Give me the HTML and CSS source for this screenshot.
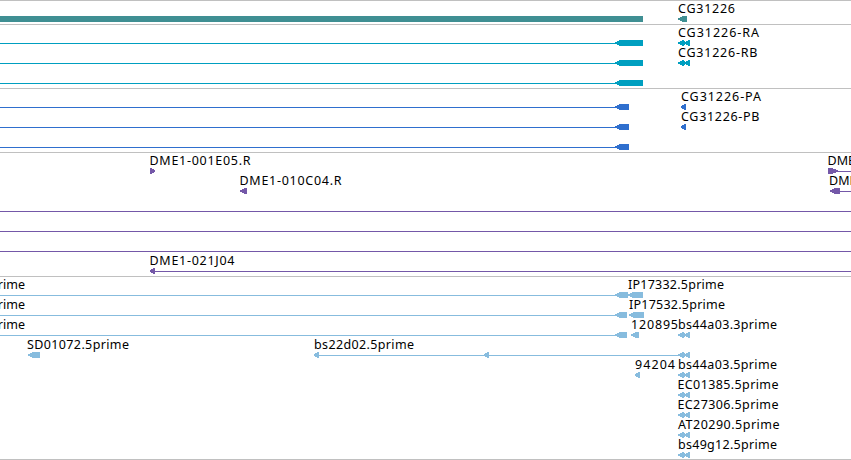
FILE: index.html
```
<!DOCTYPE html>
<html lang="en">
<head>
    <meta charset="UTF-8">
    <title>Genome Browser - CG31226</title>
    <link rel="stylesheet" href="styles.css">
</head>
<body>
    <!-- Shared glyphs: arrow heads and the two-exon pair, all pointing left -->
    <svg class="defs" width="0" height="0">
        <symbol id="head" viewBox="0 0 6 6" width="6" height="6">
            <path d="M0 2H2V1H4V0H6V6H4V5H2V4H0Z"/>
        </symbol>
        <symbol id="tip" viewBox="0 0 5 6" width="5" height="6">
            <path d="M0 2H1V1H3V0H5V6H3V5H1V4H0Z"/>
        </symbol>
        <symbol id="pair" viewBox="0 0 12 6" width="12" height="6">
            <path d="M0 2H2V1H4V0H6V1H7V2H8V1H10V0H12V6H10V5H8V4H7V5H6V6H4V5H2V4H0Z"/>
        </symbol>
    </svg>

    <main class="browser">
        <section class="track gene">
            <svg width="851" height="23">
                <rect x="0" y="15" width="643" height="6"/>
                <text x="678" y="12" textLength="57">CG31226</text>
                <use href="#head" x="678" y="15"/>
                <rect x="683" y="15" width="4" height="6"/>
            </svg>
        </section>

        <section class="track transcript">
            <svg width="851" height="63">
                <rect x="0" y="18" width="620" height="1"/>
                <use href="#head" x="615" y="15"/>
                <rect x="620" y="15" width="23" height="6"/>
                <text x="678" y="12" textLength="81">CG31226-RA</text>
                <use href="#pair" x="678" y="15"/>

                <rect x="0" y="38" width="620" height="1"/>
                <use href="#head" x="615" y="35"/>
                <rect x="620" y="35" width="23" height="6"/>
                <text x="678" y="32" textLength="79.5">CG31226-RB</text>
                <use href="#pair" x="678" y="35"/>

                <rect x="0" y="58" width="620" height="1"/>
                <use href="#head" x="615" y="55"/>
                <rect x="620" y="55" width="23" height="6"/>
            </svg>
        </section>

        <section class="track protein">
            <svg width="851" height="63">
                <rect x="0" y="18" width="620" height="1"/>
                <use href="#head" x="615" y="15"/>
                <rect x="620" y="15" width="9" height="6"/>
                <text x="681" y="12" textLength="80">CG31226-PA</text>
                <use href="#tip" x="681" y="15"/>

                <rect x="0" y="38" width="620" height="1"/>
                <use href="#head" x="615" y="35"/>
                <rect x="620" y="35" width="9" height="6"/>
                <text x="681" y="32" textLength="78.5">CG31226-PB</text>
                <use href="#tip" x="681" y="35"/>

                <rect x="0" y="58" width="620" height="1"/>
                <use href="#head" x="615" y="55"/>
                <rect x="620" y="55" width="9" height="6"/>
            </svg>
        </section>

        <section class="track clone">
            <svg width="851" height="123">
                <text x="149.5" y="12" textLength="101">DME1-001E05.R</text>
                <path d="M150 15H152V16H154V17H155V19H154V20H152V21H150Z"/>
                <text x="827.5" y="12">DME</text>
                <path d="M828 15H833V16H836V17H838V19H836V20H833V21H828Z"/>
                <rect x="836" y="18" width="15" height="1"/>

                <text x="239.5" y="32" textLength="102">DME1-010C04.R</text>
                <use href="#head" x="240" y="35"/>
                <rect x="245" y="35" width="2" height="6"/>
                <text x="829" y="32">DME</text>
                <use href="#head" x="830" y="35"/>
                <rect x="835" y="35" width="5" height="6"/>
                <rect x="840" y="38" width="11" height="1"/>

                <rect x="0" y="58" width="851" height="1"/>
                <rect x="0" y="78" width="851" height="1"/>
                <rect x="0" y="98" width="851" height="1"/>

                <text x="149.5" y="112" textLength="85">DME1-021J04</text>
                <use href="#tip" x="150" y="115"/>
                <rect x="152" y="118" width="699" height="1"/>
            </svg>
        </section>

        <section class="track est">
            <svg width="851" height="182">
                <text class="end" x="25" y="12">rime</text>
                <rect x="0" y="18" width="618" height="1"/>
                <use href="#head" x="615" y="15"/>
                <rect x="620" y="15" width="8" height="6"/>
                <text x="628" y="12" textLength="96">IP17332.5prime</text>
                <use href="#head" x="628" y="15"/>
                <rect x="633" y="15" width="10" height="6"/>

                <text class="end" x="25" y="32">rime</text>
                <rect x="0" y="38" width="618" height="1"/>
                <use href="#head" x="615" y="35"/>
                <rect x="620" y="35" width="7" height="6"/>
                <text x="629" y="32" textLength="96">IP17532.5prime</text>
                <use href="#head" x="629" y="35"/>
                <rect x="634" y="35" width="10" height="6"/>

                <text class="end" x="25" y="52">rime</text>
                <rect x="0" y="58" width="618" height="1"/>
                <use href="#head" x="615" y="55"/>
                <rect x="620" y="55" width="7" height="6"/>
                <text x="631" y="52" textLength="47">120895</text>
                <use href="#head" x="631" y="55"/>
                <rect x="636" y="55" width="3" height="6"/>
                <text x="678" y="52" textLength="99">bs44a03.3prime</text>
                <use href="#pair" x="678" y="55"/>

                <text x="27" y="72" textLength="102">SD01072.5prime</text>
                <use href="#head" x="28" y="75"/>
                <rect x="33" y="75" width="7" height="6"/>
                <text x="314" y="72" textLength="100">bs22d02.5prime</text>
                <rect x="316" y="78" width="366" height="1"/>
                <use href="#tip" x="314" y="75"/>
                <use href="#tip" x="484" y="75"/>
                <use href="#pair" x="678" y="75"/>

                <text x="635" y="92" textLength="40">94204</text>
                <use href="#tip" x="635" y="95"/>
                <text x="678" y="92" textLength="99">bs44a03.5prime</text>
                <use href="#pair" x="678" y="95"/>

                <text x="677.5" y="112" textLength="101">EC01385.5prime</text>
                <use href="#pair" x="678" y="115"/>

                <text x="677.5" y="132" textLength="101">EC27306.5prime</text>
                <use href="#pair" x="678" y="135"/>

                <text x="678" y="152" textLength="101.5">AT20290.5prime</text>
                <use href="#pair" x="678" y="155"/>

                <text x="678" y="172" textLength="99">bs49g12.5prime</text>
                <use href="#pair" x="678" y="175"/>
            </svg>
        </section>
    </main>
</body>
</html>
```

FILE: styles.css
```
body {
    margin: 0;
    background-color: white;
    overflow: hidden;
}
.defs {
    display: none;
}
.browser {
    display: flex;
    flex-direction: column;
    width: 851px;
    border-bottom: 1px solid #c0c0c0;
}
.track {
    border-top: 1px solid #c0c0c0;
    overflow: hidden;
}
.track svg {
    display: block;
    shape-rendering: crispEdges;
}
.track text {
    font-family: "Noto Sans", "DejaVu Sans", sans-serif;
    font-size: 12.5px;
    fill: black;
}
.track .end {
    text-anchor: end;
}
.gene {
    fill: #3f8f93;
}
.transcript {
    fill: #009fc0;
}
.protein {
    fill: #2f6fce;
}
.clone {
    fill: #7458a8;
}
.est {
    fill: #87bcde;
}
```
